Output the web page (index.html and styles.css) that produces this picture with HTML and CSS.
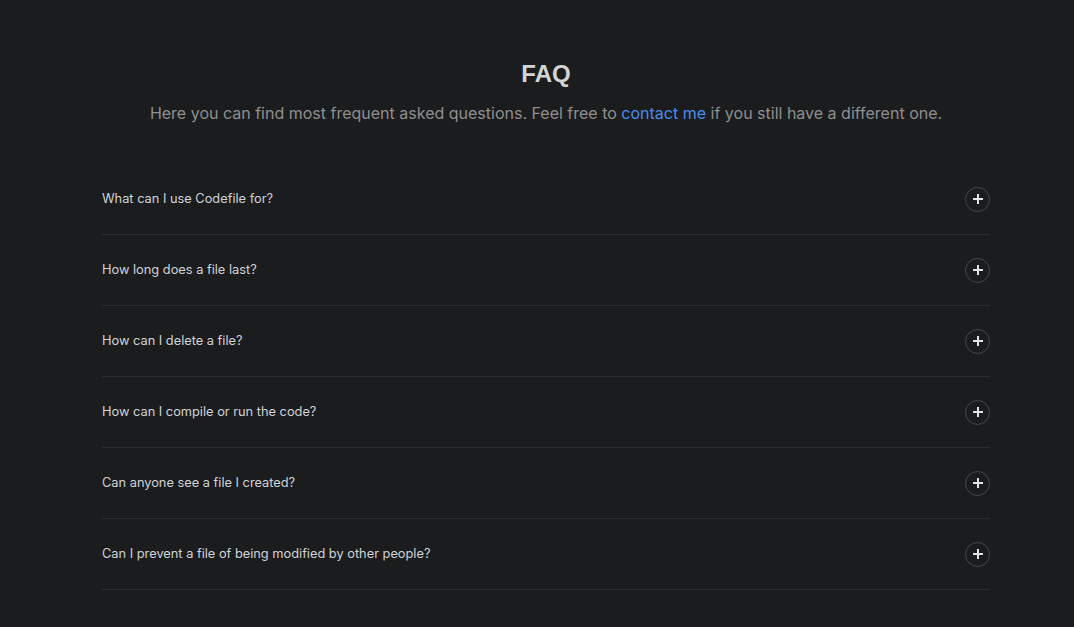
FILE: index.html
```html
<!DOCTYPE html>
<html lang="en">
<head>
<meta charset="utf-8">
<title>FAQ</title>
<link rel="stylesheet" href="styles.css">
</head>
<body>
<section class="faq">
  <h1 class="faq-title">FAQ</h1>
  <p class="faq-sub">Here you can find most frequent asked questions. Feel free to <a href="#" class="link">contact me</a> if you still have a different one.</p>
  <div class="faq-list">
    <div class="faq-item"><span class="q">What can I use Codefile for?</span><span class="toggle"><svg viewBox="0 0 12 12" width="12" height="12"><path d="M6 1v10M1 6h10" stroke="#e2e2e2" stroke-width="2"/></svg></span></div>
    <div class="faq-item"><span class="q">How long does a file last?</span><span class="toggle"><svg viewBox="0 0 12 12" width="12" height="12"><path d="M6 1v10M1 6h10" stroke="#e2e2e2" stroke-width="2"/></svg></span></div>
    <div class="faq-item"><span class="q">How can I delete a file?</span><span class="toggle"><svg viewBox="0 0 12 12" width="12" height="12"><path d="M6 1v10M1 6h10" stroke="#e2e2e2" stroke-width="2"/></svg></span></div>
    <div class="faq-item"><span class="q">How can I compile or run the code?</span><span class="toggle"><svg viewBox="0 0 12 12" width="12" height="12"><path d="M6 1v10M1 6h10" stroke="#e2e2e2" stroke-width="2"/></svg></span></div>
    <div class="faq-item"><span class="q">Can anyone see a file I created?</span><span class="toggle"><svg viewBox="0 0 12 12" width="12" height="12"><path d="M6 1v10M1 6h10" stroke="#e2e2e2" stroke-width="2"/></svg></span></div>
    <div class="faq-item"><span class="q">Can I prevent a file of being modified by other people?</span><span class="toggle"><svg viewBox="0 0 12 12" width="12" height="12"><path d="M6 1v10M1 6h10" stroke="#e2e2e2" stroke-width="2"/></svg></span></div>
  </div>
</section>
</body>
</html>
```
FILE: styles.css
```css
html, body {
  margin: 0;
  padding: 0;
  background: #1b1c1e;
  height: 100%;
}
body {
  font-family: Inter, "Noto Sans", sans-serif;
  color: #c8c8c8;
}
.faq {
  padding: 58px 84px 0 102px;
}
.faq-title {
  margin: 0;
  text-align: center;
  font-family: "Liberation Sans", Arial, sans-serif;
  font-weight: 700;
  font-size: 24px;
  line-height: 32px;
  color: #d4d4d4;
}
.faq-sub {
  margin: 11px 0 0;
  text-align: center;
  font-size: 16px;
  line-height: 24px;
  color: #8f8f8f;
}
.link {
  color: #4a8cf0;
  text-decoration: none;
}
.faq-list {
  margin-top: 39px;
  display: flex;
  flex-direction: column;
}
.faq-item {
  display: flex;
  align-items: center;
  justify-content: space-between;
  height: 70px;
  border-bottom: 1px solid #2b2c2e;
}
.q {
  font-family: Inter, "Noto Sans", sans-serif;
  font-size: 12.8px;
  color: #cfd3d8;
  margin-bottom: 2px;
}
.toggle {
  width: 23px;
  height: 23px;
  border: 1px solid #46474a;
  border-radius: 50%;
  display: flex;
  align-items: center;
  justify-content: center;
}
```
